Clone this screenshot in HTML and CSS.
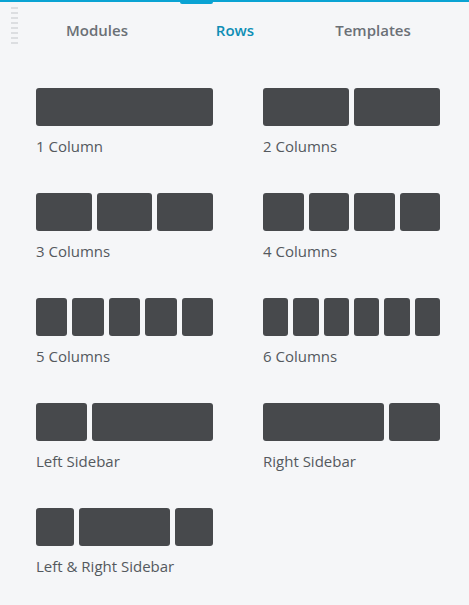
FILE: index.html
```html
<!DOCTYPE html>
<html lang="en">
<head>
    <meta charset="UTF-8">
    <meta name="viewport" content="width=device-width, initial-scale=1.0">
    <title>Rows</title>
    <link rel="stylesheet" href="styles.css">
</head>
<body>
    <div class="panel">
        <!-- Tabs -->
        <div class="header">
            <span class="grip"></span>
            <span class="tab-marker"></span>
            <div class="tabs">
                <a class="tab">Modules</a>
                <a class="tab active">Rows</a>
                <a class="tab">Templates</a>
            </div>
        </div>

        <!-- Row layouts -->
        <div class="layouts">
            <div class="layout">
                <div class="cols"><span class="col"></span></div>
                <div class="label">1 Column</div>
            </div>
            <div class="layout">
                <div class="cols"><span class="col"></span><span class="col"></span></div>
                <div class="label">2 Columns</div>
            </div>
            <div class="layout">
                <div class="cols"><span class="col"></span><span class="col"></span><span class="col"></span></div>
                <div class="label">3 Columns</div>
            </div>
            <div class="layout">
                <div class="cols"><span class="col"></span><span class="col"></span><span class="col"></span><span class="col"></span></div>
                <div class="label">4 Columns</div>
            </div>
            <div class="layout">
                <div class="cols"><span class="col"></span><span class="col"></span><span class="col"></span><span class="col"></span><span class="col"></span></div>
                <div class="label">5 Columns</div>
            </div>
            <div class="layout">
                <div class="cols"><span class="col"></span><span class="col"></span><span class="col"></span><span class="col"></span><span class="col"></span><span class="col"></span></div>
                <div class="label">6 Columns</div>
            </div>
            <div class="layout">
                <div class="cols"><span class="col side"></span><span class="col main"></span></div>
                <div class="label">Left Sidebar</div>
            </div>
            <div class="layout">
                <div class="cols"><span class="col main"></span><span class="col side"></span></div>
                <div class="label">Right Sidebar</div>
            </div>
            <div class="layout">
                <div class="cols"><span class="col narrow"></span><span class="col center"></span><span class="col narrow"></span></div>
                <div class="label">Left &amp; Right Sidebar</div>
            </div>
        </div>
    </div>
</body>
</html>
```

FILE: styles.css
```css
body {
    margin: 0;
    background: #f5f6f8;
    font-family: "Open Sans", Arial, sans-serif;
}
.panel {
    border-top: 2px solid #0aa3d3;
    min-height: 603px;
}
.header {
    position: relative;
}
.grip {
    position: absolute;
    left: 11px;
    top: 5px;
    width: 7px;
    height: 38px;
    background: repeating-linear-gradient(to bottom, #dcdee1 0, #dcdee1 2px, transparent 2px, transparent 5px);
}
.tab-marker {
    position: absolute;
    left: 180px;
    top: 0;
    width: 33px;
    height: 2px;
    background: #0aa3d3;
    border-radius: 0 0 2px 2px;
}
.tabs {
    display: flex;
    align-items: center;
    height: 56px;
    padding: 0 27px 2px 28px;
}
.tab {
    flex: 1;
    text-align: center;
    font-size: 15px;
    font-weight: 600;
    color: #6b7076;
    cursor: pointer;
}
.tab.active {
    color: #0e8eb5;
}
.layouts {
    display: grid;
    grid-template-columns: 177px 177px;
    column-gap: 50px;
    row-gap: 37px;
    padding: 28px 29px 0 36px;
}
.cols {
    display: flex;
    gap: 5px;
    height: 38px;
}
.col {
    flex: 1;
    background: #47494c;
    border-radius: 3px;
}
.col.side {
    flex: 51;
}
.col.main {
    flex: 121;
}
.col.narrow {
    flex: 38;
}
.col.center {
    flex: 90;
}
.label {
    margin-top: 10px;
    line-height: 20px;
    font-size: 15px;
    color: #54595e;
}
```
